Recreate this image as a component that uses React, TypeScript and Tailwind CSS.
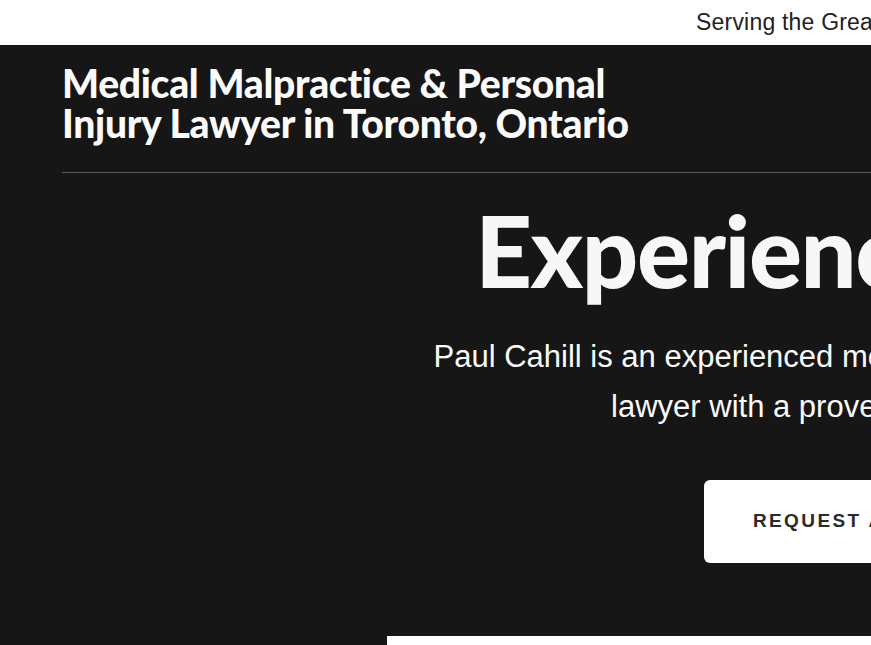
export default function App() {
  return (
    <div className="w-full h-screen overflow-hidden bg-[#161616]">
      <div className="w-[1820px]">
        <div className="h-[45px] bg-white flex items-center pl-[696px] text-[23px] text-[#222] whitespace-nowrap font-['Liberation_Sans',Arial,sans-serif] tracking-[0.2px]">
          Serving the Greater Toronto Area and Surrounding Regions
        </div>
        <section className="bg-[#161616] pt-[18px] font-['Lato',sans-serif]">
          <h1 className="px-[62px] text-[39px] leading-[40px] font-black text-[#fafafa] tracking-[-0.3px]">
            Medical Malpractice &amp; Personal
            <br />
            Injury Lawyer in Toronto, Ontario
          </h1>
          <div className="mx-[62px] mt-[29px] border-t border-[#5a5a5a]" />
          <div className="flex flex-col items-center text-center">
            <h2 className="mt-[12px] text-[99px] leading-[130px] font-black text-[#f7f7f7] tracking-[-1.4px] whitespace-nowrap">
              Experienced Lawyer
            </h2>
            <p className="mt-[17px] text-[31px] leading-[50px] text-[#fafafa] font-['Liberation_Sans',Arial,sans-serif]">
              Paul Cahill is an experienced medical malpractice and personal injury
              <br />
              lawyer with a proven track record of results.
            </p>
            <a
              href="#"
              className="mt-[48px] h-[83px] px-[49px] flex items-center rounded-[6px] bg-white text-[#2b2b2b] text-[19px] font-bold tracking-[2.4px] font-['Liberation_Sans',Arial,sans-serif] whitespace-nowrap"
            >
              REQUEST A CONSULTATION
            </a>
          </div>
          <div className="ml-[387px] mt-[73px] h-[200px] bg-white" />
        </section>
      </div>
    </div>
  );
}
